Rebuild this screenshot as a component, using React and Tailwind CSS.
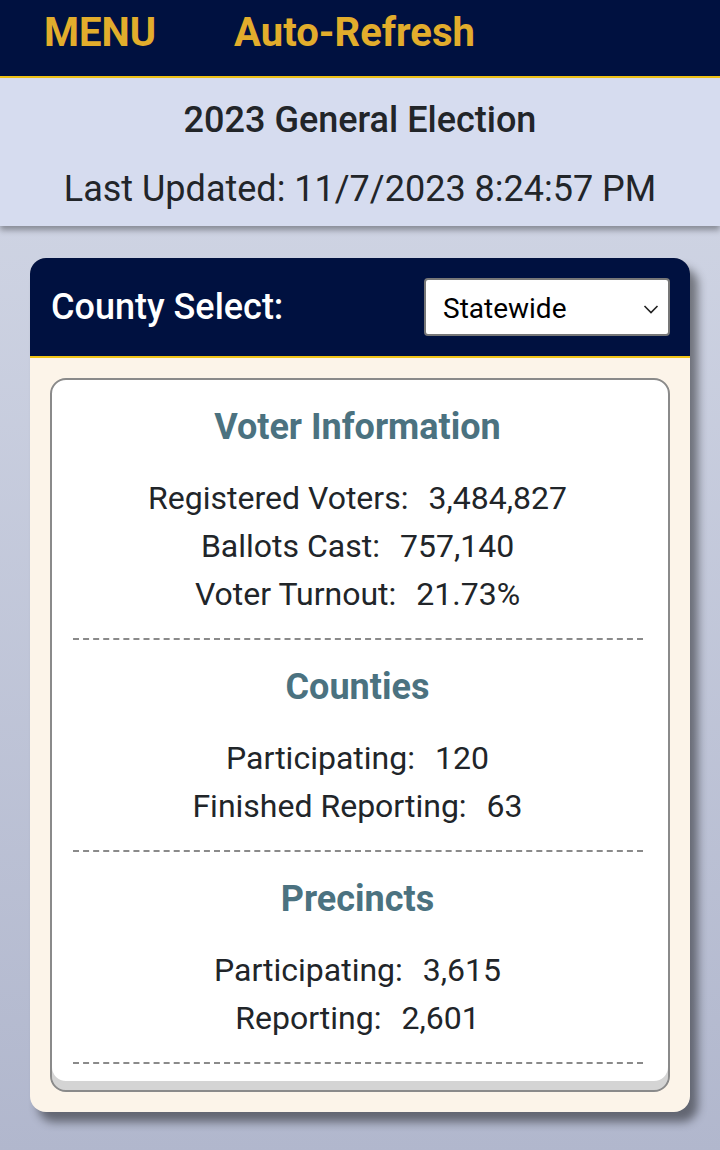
import React from "react";

function Row({ label, value }) {
  return (
    <div className="text-[32px] leading-[48px] text-[#212529]">
      {label}
      <span className="ml-[20px]">{value}</span>
    </div>
  );
}

function Section({ title, rows }) {
  return (
    <div className="flex flex-col items-center">
      <h2 className="text-[36px] leading-[48px] font-bold text-[#4b7280] mb-[23px] mt-[23px]">
        {title}
      </h2>
      {rows.map((r) => (
        <Row key={r[0]} label={r[0]} value={r[1]} />
      ))}
      <div className="w-[570px] border-t-2 border-dashed border-[#8a8a8a] mt-[20px]" />
    </div>
  );
}

export default function App() {
  return (
    <div
      className="min-h-[1150px] w-[720px] bg-gradient-to-b from-[#d5dae8] to-[#b1b7cd]"
      style={{ fontFamily: "Roboto, 'Liberation Sans', sans-serif" }}
    >
      <nav className="h-[78px] bg-[#001140] border-b-2 border-[#f2c515] flex items-center pl-[44px] gap-[78px] pb-[10px]">
        <span className="text-[40px] font-bold text-[#e2ad2c]">MENU</span>
        <span className="text-[40px] font-bold text-[#e2ad2c]">Auto-Refresh</span>
      </nav>
      <header className="h-[148px] bg-[#d6dcef] shadow-[0_4px_6px_rgba(0,0,0,0.35)] flex flex-col items-center text-[#222529]">
        <div className="text-[36px] font-medium mt-[18px] leading-[48px]">2023 General Election</div>
        <div className="text-[36px] mt-[21px] leading-[48px]">Last Updated: 11/7/2023 8:24:57 PM</div>
      </header>
      <div className="px-[30px] pt-[32px] pb-[40px]">
        <div className="rounded-[16px] bg-[#fcf4e9] shadow-[8px_10px_10px_rgba(0,0,0,0.45)] overflow-hidden">
          <div className="h-[100px] bg-[#001140] border-b-2 border-[#f2c515] flex items-center justify-between pl-[21px] pr-[20px]">
            <span className="text-[36px] font-medium text-white">County Select:</span>
            <div className="w-[246px] h-[58px] bg-white border-2 border-[#777] rounded-[4px] flex items-center justify-between pl-[17px] pr-[9px]">
              <span className="text-[28px] text-black mt-[3px]">Statewide</span>
              <svg width="16" height="10" viewBox="0 0 16 10" fill="none" stroke="#222" strokeWidth="1.6" className="mt-[3px]">
                <path d="M1.5 2 L8 8.5 L14.5 2" />
              </svg>
            </div>
          </div>
          <div className="px-[20px] pt-[20px] pb-[20px]">
            <div className="bg-white border-2 border-[#8a8a8a] rounded-[16px] shadow-[inset_0_-9px_0_#d4d4d4] pb-[26px] pr-[5px]">
              <Section
                title="Voter Information"
                rows={[
                  ["Registered Voters:", "3,484,827"],
                  ["Ballots Cast:", "757,140"],
                  ["Voter Turnout:", "21.73%"],
                ]}
              />
              <Section
                title="Counties"
                rows={[
                  ["Participating:", "120"],
                  ["Finished Reporting:", "63"],
                ]}
              />
              <Section
                title="Precincts"
                rows={[
                  ["Participating:", "3,615"],
                  ["Reporting:", "2,601"],
                ]}
              />
            </div>
          </div>
        </div>
      </div>
    </div>
  );
}
